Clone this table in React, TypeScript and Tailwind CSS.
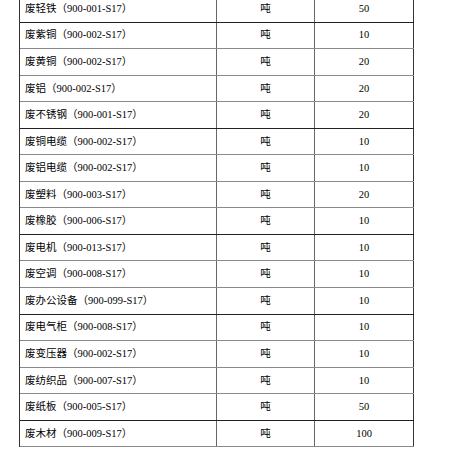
const rows: [string, string, string][] = [
  ['废轻铁', '900-001-S17', '50'],
  ['废紫铜', '900-002-S17', '10'],
  ['废黄铜', '900-002-S17', '20'],
  ['废铝', '900-002-S17', '20'],
  ['废不锈钢', '900-001-S17', '20'],
  ['废铜电缆', '900-002-S17', '10'],
  ['废铝电缆', '900-002-S17', '10'],
  ['废塑料', '900-003-S17', '20'],
  ['废橡胶', '900-006-S17', '10'],
  ['废电机', '900-013-S17', '10'],
  ['废空调', '900-008-S17', '10'],
  ['废办公设备', '900-099-S17', '10'],
  ['废电气柜', '900-008-S17', '10'],
  ['废变压器', '900-002-S17', '10'],
  ['废纺织品', '900-007-S17', '10'],
  ['废纸板', '900-005-S17', '50'],
  ['废木材', '900-009-S17', '100'],
];

// scanned table: some rules come out darker than others
const darkLines = [0, 4, 8, 11, 15];

export default function App() {
  return (
    <div className="w-[450px] h-[450px] overflow-hidden bg-white">
      <div
        className="ml-[19px] mt-[-4px] w-[395px] border-l border-[#333] text-[10.5px] text-black"
        style={{ fontFamily: '"Liberation Serif", "Noto Sans CJK SC", serif' }}
      >
        {rows.map(([name, code, qty], i) => (
          <div
            key={i}
            className={
              'flex h-[26.56px] border-b ' +
              (darkLines.includes(i) ? 'border-[#222]' : 'border-[#8a8a8a]')
            }
          >
            <div className="w-[197px] flex items-center pl-[5px] border-r border-[#666]">
              {name}（{code}）
            </div>
            <div className="w-[98px] flex items-center justify-center border-r border-[#666]">
              吨
            </div>
            <div className="w-[99px] flex items-center justify-center border-r border-[#333]">
              {qty}
            </div>
          </div>
        ))}
      </div>
    </div>
  );
}
